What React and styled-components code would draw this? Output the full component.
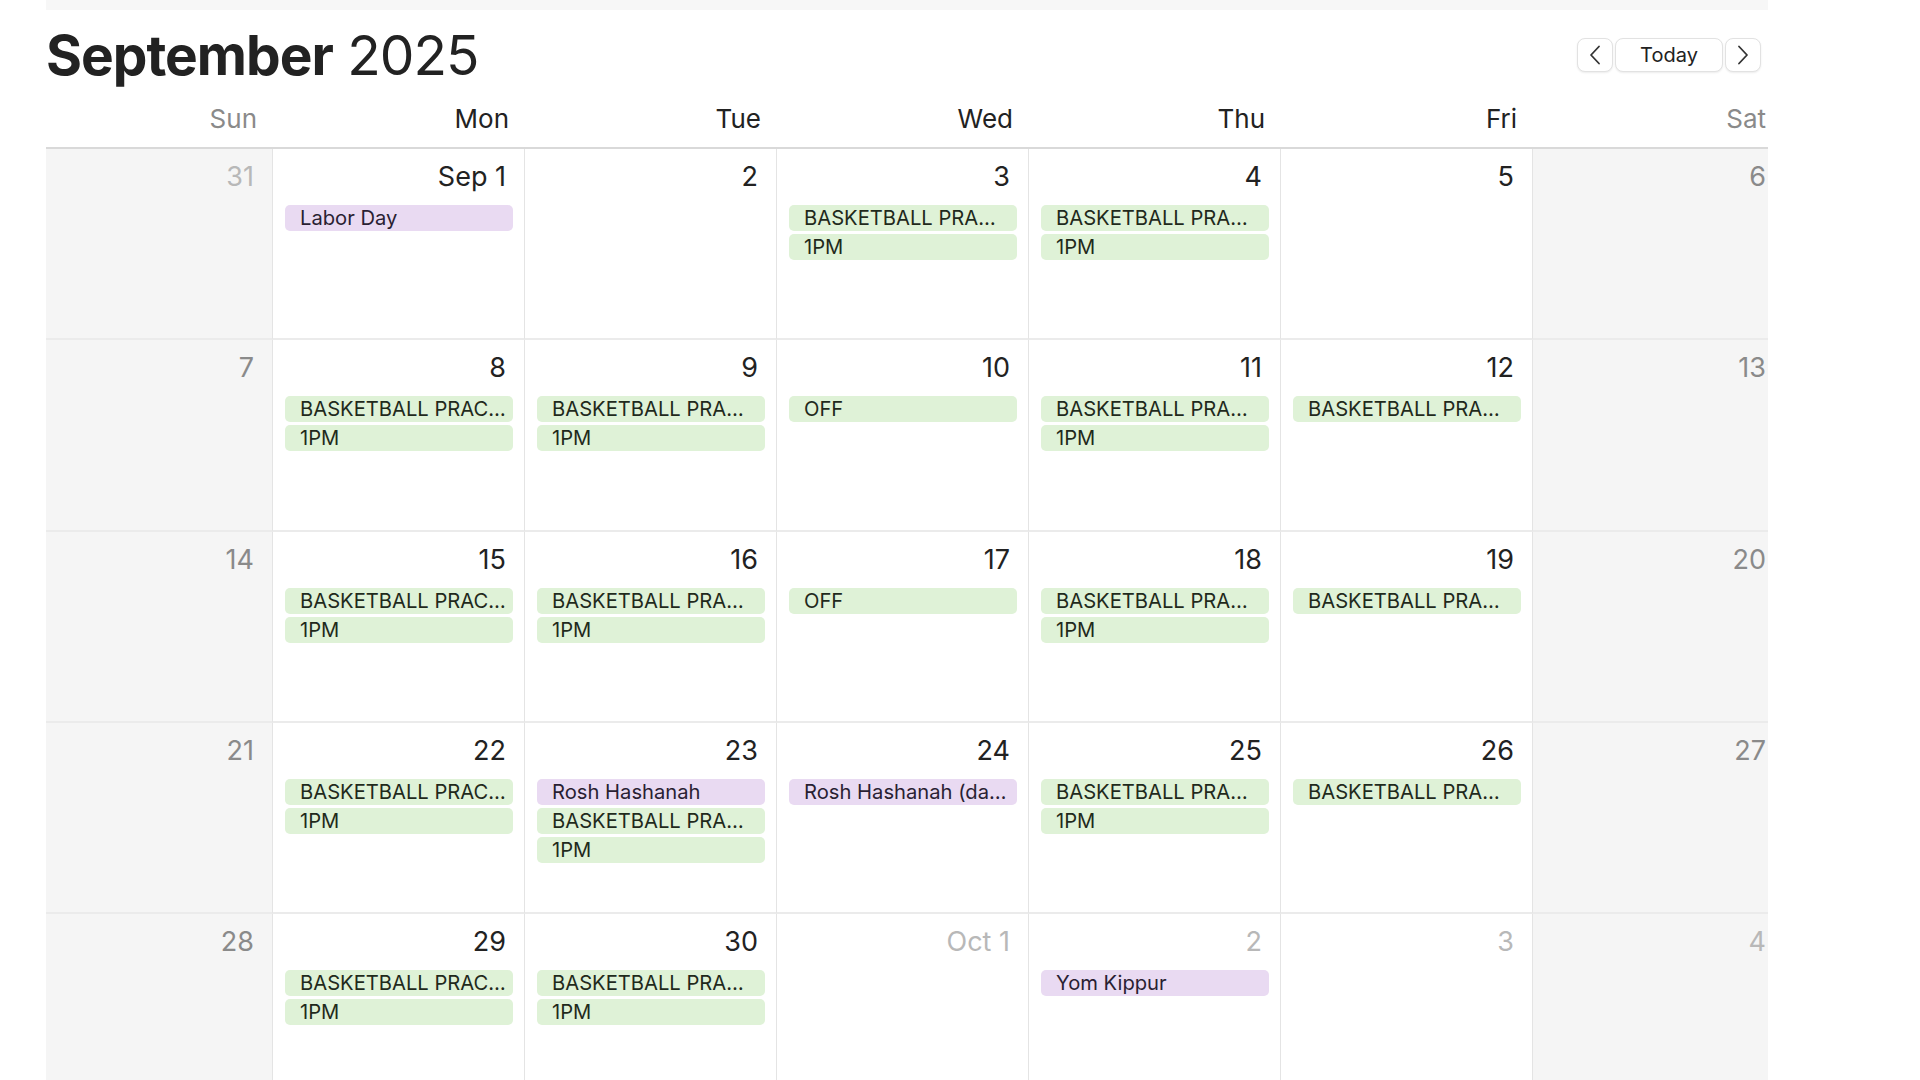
import React from 'react';
import styled, { createGlobalStyle } from 'styled-components';

const GlobalStyle = createGlobalStyle`
  html, body {
    margin: 0;
    padding: 0;
    background: #ffffff;
    overflow: hidden;
  }
  body {
    font-family: Inter, "Noto Sans", "Liberation Sans", sans-serif;
    color: #222222;
  }
`;

const Page = styled.div`
  width: 1722px;
  margin-left: 46px;
`;

const TopStrip = styled.div`
  height: 10px;
  background: #f7f7f7;
`;

const Toolbar = styled.div`
  height: 90px;
  display: flex;
  align-items: center;
  justify-content: space-between;
`;

const Title = styled.h1`
  margin: 0;
  font-size: 55px;
  font-weight: 400;
  letter-spacing: -1px;
  line-height: 1;
  color: #222222;

  strong {
    font-weight: 700;
  }
`;

const Nav = styled.div`
  display: flex;
  gap: 2px;
  margin-right: 7px;
`;

const NavButton = styled.button`
  height: 34px;
  min-width: ${(p) => (p.$wide ? '108px' : '36px')};
  padding: 0;
  display: flex;
  align-items: center;
  justify-content: center;
  background: #ffffff;
  border: 1px solid #e2e2e2;
  border-radius: 8px;
  box-shadow: 0 1px 2px rgba(0, 0, 0, 0.08);
  font-family: inherit;
  font-size: 20px;
  color: #222222;
  cursor: pointer;
`;

const Viewport = styled.div`
  overflow: hidden;
`;

const Sheet = styled.div`
  width: 1764px;
  margin-left: -25px;
`;

const WeekHeader = styled.div`
  display: grid;
  grid-template-columns: repeat(7, 1fr);
  height: 47px;
  border-bottom: 2px solid #d9d9d9;
`;

const WeekName = styled.div`
  padding: 4px ${(p) => (p.$last ? '19px' : '16px')} 0 0;
  text-align: right;
  font-size: 26px;
  line-height: 30px;
  color: ${(p) => (p.$weekend ? '#8a8a8a' : '#222222')};
`;

const Grid = styled.div`
  display: grid;
  grid-template-columns: repeat(7, 1fr);
  grid-auto-rows: 191.3px;
`;

const Cell = styled.div`
  background: ${(p) => (p.$weekend ? '#f5f5f5' : '#ffffff')};
  border-right: 1px solid #e4e4e4;
  border-bottom: 2px solid #ebebeb;
  padding: 12px 11px 0 12px;
  display: flex;
  flex-direction: column;
  gap: 3px;
  min-width: 0;
`;

const DayNumber = styled.div`
  font-size: 27px;
  line-height: 32px;
  text-align: right;
  padding-right: 7px;
  margin-bottom: 9px;
  color: ${(p) => (p.$other ? '#b8b8b8' : p.$weekend ? '#8a8a8a' : '#222222')};
`;

const EventBar = styled.div`
  height: 26px;
  padding: 0 0 0 15px;
  border-radius: 5px;
  background: ${(p) => (p.$kind === 'holiday' ? '#e9daf2' : '#dff2d7')};
  color: ${(p) => (p.$kind === 'holiday' ? '#2a1f33' : '#1f2a1c')};
  font-size: 20.2px;
  line-height: 26px;
  white-space: nowrap;
  overflow: hidden;
`;

const ChevronIcon = ({ dir }) => (
  <svg width="12" height="20" viewBox="0 0 12 20" fill="none">
    <polyline
      points={dir === 'left' ? '10,1.5 2,10 10,18.5' : '2,1.5 10,10 2,18.5'}
      stroke="#333333"
      strokeWidth="1.8"
      strokeLinecap="round"
      strokeLinejoin="round"
    />
  </svg>
);

const bbMon = [
  ['BASKETBALL PRAC…', 'practice'],
  ['1PM', 'practice'],
];
const bb = [
  ['BASKETBALL PRA…', 'practice'],
  ['1PM', 'practice'],
];
const bbOnly = [['BASKETBALL PRA…', 'practice']];
const off = [['OFF', 'practice']];

const weeks = [
  [
    { d: '31', other: true },
    { d: 'Sep 1', events: [['Labor Day', 'holiday']] },
    { d: '2' },
    { d: '3', events: bb },
    { d: '4', events: bb },
    { d: '5' },
    { d: '6' },
  ],
  [
    { d: '7' },
    { d: '8', events: bbMon },
    { d: '9', events: bb },
    { d: '10', events: off },
    { d: '11', events: bb },
    { d: '12', events: bbOnly },
    { d: '13' },
  ],
  [
    { d: '14' },
    { d: '15', events: bbMon },
    { d: '16', events: bb },
    { d: '17', events: off },
    { d: '18', events: bb },
    { d: '19', events: bbOnly },
    { d: '20' },
  ],
  [
    { d: '21' },
    { d: '22', events: bbMon },
    { d: '23', events: [['Rosh Hashanah', 'holiday'], ...bb] },
    { d: '24', events: [['Rosh Hashanah (da…', 'holiday']] },
    { d: '25', events: bb },
    { d: '26', events: bbOnly },
    { d: '27' },
  ],
  [
    { d: '28' },
    { d: '29', events: bbMon },
    { d: '30', events: bb },
    { d: 'Oct 1', other: true },
    { d: '2', other: true, events: [['Yom Kippur', 'holiday']] },
    { d: '3', other: true },
    { d: '4', other: true },
  ],
];

const dayNames = ['Sun', 'Mon', 'Tue', 'Wed', 'Thu', 'Fri', 'Sat'];

export default function App() {
  return (
    <>
      <GlobalStyle />
      <Page>
        <TopStrip />
        <Toolbar>
          <Title>
            <strong>September</strong> 2025
          </Title>
          <Nav>
            <NavButton aria-label="Previous month">
              <ChevronIcon dir="left" />
            </NavButton>
            <NavButton $wide>Today</NavButton>
            <NavButton aria-label="Next month">
              <ChevronIcon dir="right" />
            </NavButton>
          </Nav>
        </Toolbar>
        <Viewport>
          <Sheet>
            <WeekHeader>
              {dayNames.map((name, i) => (
                <WeekName key={name} $weekend={i === 0 || i === 6} $last={i === 6}>
                  {name}
                </WeekName>
              ))}
            </WeekHeader>
            <Grid>
              {weeks.map((week, w) =>
                week.map((day, i) => {
                  const weekend = i === 0 || i === 6;
                  return (
                    <Cell key={`${w}-${i}`} $weekend={weekend}>
                      <DayNumber $other={day.other} $weekend={weekend}>
                        {day.d}
                      </DayNumber>
                      {(day.events || []).map(([label, kind], k) => (
                        <EventBar key={k} $kind={kind}>
                          {label}
                        </EventBar>
                      ))}
                    </Cell>
                  );
                })
              )}
            </Grid>
          </Sheet>
        </Viewport>
      </Page>
    </>
  );
}
